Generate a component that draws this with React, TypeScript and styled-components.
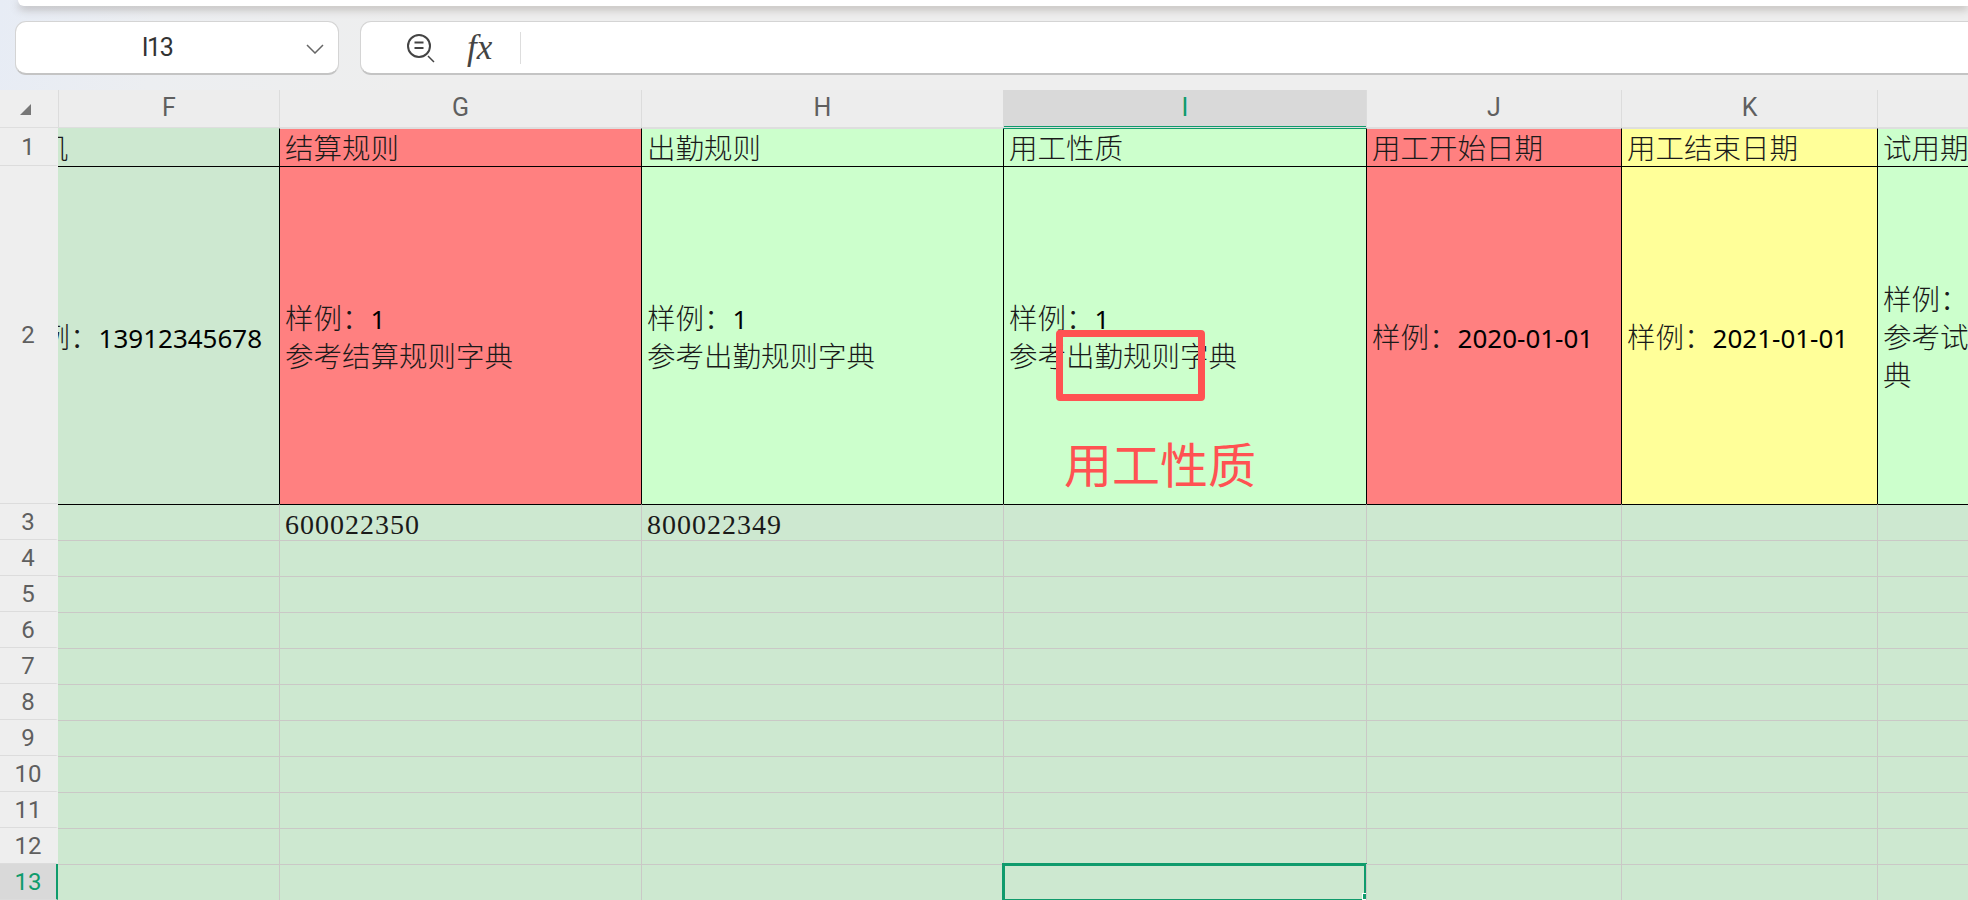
import { Fragment } from 'react';
import styled, { createGlobalStyle } from 'styled-components';

const GlobalStyle = createGlobalStyle`
	html,
	body {
		margin: 0;
		padding: 0;
		width: 1968px;
		height: 900px;
		overflow: hidden;
		background-color: #eeeeee;
	}
	* {
		box-sizing: border-box;
	}
`;

const CJK = `"Noto Sans CJK SC", sans-serif`;

const Page = styled.div`
	width: 1968px;
	height: 900px;
	overflow: hidden;
	font-family: Roboto, ${CJK};
	background: linear-gradient(100deg, #e7ecf5 0, #eceef1 160px, #eeeeee 420px);
`;

const TopBar = styled.div`
	height: 6px;
	margin-left: 18px;
	background-color: #fff;
	border-bottom-left-radius: 10px;
	box-shadow: 0 3px 9px rgba(110, 100, 90, 0.45);
`;

const FormulaRow = styled.div`
	display: flex;
	gap: 21px;
	padding: 15px 0 15px 15px;
`;

const NameBox = styled.div`
	position: relative;
	display: flex;
	align-items: center;
	justify-content: center;
	width: 324px;
	height: 54px;
	padding-right: 40px;
	background-color: #fff;
	border: 1px solid #d4d4d4;
	border-bottom: 2px solid #c4c4c4;
	border-radius: 11px;
	font-size: 25px;
	letter-spacing: -1.5px;
	color: #333;
`;

const Chevron = styled.svg`
	position: absolute;
	right: 14px;
	top: 22px;
	width: 18px;
	height: 10px;
`;

const FormulaBox = styled.div`
	flex: 1;
	display: flex;
	align-items: center;
	height: 54px;
	padding-left: 45px;
	background-color: #fff;
	border: 1px solid #d4d4d4;
	border-right: none;
	border-bottom: 2px solid #c4c4c4;
	border-radius: 11px 0 0 11px;
`;

const ZoomIcon = styled.svg`
	width: 30px;
	height: 30px;
	flex: none;
`;

const FxLabel = styled.span`
	width: 32px;
	margin-left: 31px;
	font-family: "Liberation Serif", serif;
	font-style: italic;
	font-size: 35px;
	line-height: 40px;
	color: #444;
`;

const Divider = styled.div`
	width: 1px;
	height: 32px;
	margin-left: 21px;
	background-color: #dddddd;
`;

const SheetGrid = styled.div`
	display: grid;
	grid-template-columns: 58px 221px 362px 362px 363px 255px 256px 200px;
	grid-template-rows: 38px 38px 338px repeat(11, 36px);
	width: 2077px;
`;

const Corner = styled.div`
	display: flex;
	align-items: flex-end;
	padding: 0 0 12px 20px;
	background-color: #eeeeee;
	border-bottom: 1px solid #dedede;

	i {
		width: 0;
		height: 0;
		border-style: solid;
		border-width: 0 0 11px 11px;
		border-color: transparent transparent #777 transparent;
	}
`;

const ColumnHeader = styled.div<{ $active?: boolean }>`
	position: relative;
	display: flex;
	align-items: center;
	justify-content: center;
	padding-bottom: 2px;
	font-size: 25px;
	color: ${(p) => (p.$active ? '#0f9b6c' : '#5f5f5f')};
	background-color: ${(p) => (p.$active ? '#d9d9d9' : '#ededed')};
	border-left: 1px solid ${(p) => (p.$active ? '#d9d9d9' : '#dcdcdc')};
	border-bottom: 1px solid #dedede;
	box-shadow: ${(p) =>
		p.$active ? 'inset 0 -1px #0f9b6c, 0 1px #0f9b6c' : 'none'};
	z-index: ${(p) => (p.$active ? 1 : 0)};
`;

const RowHeader = styled.div<{ $active?: boolean }>`
	display: flex;
	align-items: center;
	justify-content: center;
	font-size: 24px;
	color: ${(p) => (p.$active ? '#0f9b6c' : '#5f5f5f')};
	background-color: ${(p) => (p.$active ? '#d9d9d9' : '#eeeeee')};
	border-bottom: 1px solid #dcdcdc;
	border-right: 2px solid ${(p) => (p.$active ? '#0f9b6c' : '#eeeeee')};
`;

const Cell = styled.div<{ $fill: string; $line: string; $top: string; $noLeft?: boolean; $center?: boolean }>`
	position: relative;
	display: flex;
	align-items: ${(p) => (p.$center ? 'center' : 'flex-end')};
	min-width: 0;
	padding: ${(p) => (p.$center ? '6px 5px 0' : '0 5px')};
	overflow: ${(p) => (p.$noLeft ? 'hidden' : 'visible')};
	background-color: ${(p) => p.$fill};
	border-top: 1px solid ${(p) => p.$top};
	border-left: ${(p) => (p.$noLeft ? 'none' : `1px solid ${p.$line}`)};
`;

const CellText = styled.div<{ $shift?: number }>`
	flex: none;
	max-width: 100%;
	margin-left: ${(p) => p.$shift ?? 0}px;
	font-family: "Liberation Serif", ${CJK};
	font-size: 28.5px;
	font-weight: 300;
	line-height: 38px;
	color: #1a1a1a;
	white-space: pre-wrap;
`;

const Title = styled(CellText)`
	line-height: 32px;
`;

const Clipped = styled(CellText)`
	max-width: none;
	white-space: nowrap;
`;

const ClippedTitle = styled(Clipped)`
	line-height: 32px;
`;

const Value = styled.span`
	font-family: "Noto Sans", sans-serif;
	font-size: 26px;
	font-weight: 400;
	color: #000;
`;

const Code = styled.span`
	display: block;
	font-size: 28px;
	line-height: 30px;
	letter-spacing: 1px;
`;

const AnnotationBox = styled.div`
	position: absolute;
	left: 52px;
	top: 163px;
	width: 149px;
	height: 71px;
	border: 7px solid #ff5252;
	border-radius: 4px;
`;

const AnnotationLabel = styled.div`
	position: absolute;
	left: 60px;
	top: 261px;
	font-family: ${CJK};
	font-size: 48px;
	line-height: 68px;
	white-space: nowrap;
	color: #ff5252;
`;

const Selection = styled.div`
	position: absolute;
	left: -2px;
	top: -2px;
	right: -1px;
	bottom: -2px;
	border: 3px solid #0f9b6c;
`;

const FillHandle = styled.div`
	position: absolute;
	right: -5px;
	bottom: -1px;
	width: 7px;
	height: 7px;
	background-color: #0f9b6c;
	border: 1px solid #fff;
`;

const GREEN = '#cde8d0';
const RED = '#ff8080';
const PALE = '#ccffcc';
const YELLOW = '#ffff99';
const BLACK = '#000';
const GRID = '#cac8c6';

const columns = [
	{ label: 'F', fill: GREEN, title: '手机', sample: '13912345678', dict: '' },
	{ label: 'G', fill: RED, title: '结算规则', sample: '1', dict: '参考结算规则字典' },
	{ label: 'H', fill: PALE, title: '出勤规则', sample: '1', dict: '参考出勤规则字典' },
	{ label: 'I', fill: PALE, title: '用工性质', sample: '1', dict: '参考出勤规则字典' },
	{ label: 'J', fill: RED, title: '用工开始日期', sample: '2020-01-01', dict: '' },
	{ label: 'K', fill: YELLOW, title: '用工结束日期', sample: '2021-01-01', dict: '' },
	{ label: 'L', fill: PALE, title: '试用期限', sample: '1', dict: '参考试用期字典' },
];

const codes: Record<string, string> = { G: '600022350', H: '800022349' };
const dataRows = [3, 4, 5, 6, 7, 8, 9, 10, 11, 12, 13];

export default function App(): JSX.Element {
	return (
		<Page>
			<GlobalStyle />
			<TopBar />
			<FormulaRow>
				<NameBox>
					I13
					<Chevron viewBox='0 0 18 10' fill='none'>
						<path d='M1 1l8 8 8-8' stroke='#666' strokeWidth='1.5' />
					</Chevron>
				</NameBox>
				<FormulaBox>
					<ZoomIcon viewBox='0 0 30 30' fill='none' stroke='#444'>
						<circle cx='13' cy='13' r='11' strokeWidth='2' />
						<path d='M8.5 9.5h9M8.5 15h9' strokeWidth='2' />
						<path d='M22 23l6 6' strokeWidth='1.5' />
					</ZoomIcon>
					<FxLabel>fx</FxLabel>
					<Divider />
				</FormulaBox>
			</FormulaRow>
			<SheetGrid>
				<Corner>
					<i />
				</Corner>
				{columns.map((c) => (
					<ColumnHeader key={c.label} $active={c.label === 'I'}>
						{c.label}
					</ColumnHeader>
				))}

				<RowHeader>1</RowHeader>
				{columns.map((c) => (
					<Cell
						key={c.label}
						$fill={c.fill}
						$line={BLACK}
						$top={c.label === 'F' ? c.fill : c.label === 'I' ? '#0f9b6c' : '#dedede'}
						$noLeft={c.label === 'F'}>
						{c.label === 'F' ? (
							<ClippedTitle $shift={-52}>{c.title}</ClippedTitle>
						) : (
							<Title>{c.title}</Title>
						)}
					</Cell>
				))}

				<RowHeader>2</RowHeader>
				{columns.map((c) => (
					<Cell
						key={c.label}
						$fill={c.fill}
						$line={BLACK}
						$top={BLACK}
						$noLeft={c.label === 'F'}
						$center>
						{c.label === 'F' ? (
							<Clipped $shift={-50}>
								样例：<Value>{c.sample}</Value>
							</Clipped>
						) : (
							<CellText>
								样例：<Value>{c.sample}</Value>
								{c.dict && `\n${c.dict}`}
							</CellText>
						)}
						{c.label === 'I' && (
							<>
								<AnnotationBox />
								<AnnotationLabel>用工性质</AnnotationLabel>
							</>
						)}
					</Cell>
				))}

				{dataRows.map((row) => (
					<Fragment key={row}>
						<RowHeader $active={row === 13}>{row}</RowHeader>
						{columns.map((c) => (
							<Cell
								key={c.label}
								$fill={GREEN}
								$line={GRID}
								$top={row === 3 ? BLACK : GRID}
								$noLeft={c.label === 'F'}>
								{row === 3 && codes[c.label] && (
									<CellText>
										<Code>{codes[c.label]}</Code>
									</CellText>
								)}
								{row === 13 && c.label === 'I' && (
									<Selection>
										<FillHandle />
									</Selection>
								)}
							</Cell>
						))}
					</Fragment>
				))}
			</SheetGrid>
		</Page>
	);
}
